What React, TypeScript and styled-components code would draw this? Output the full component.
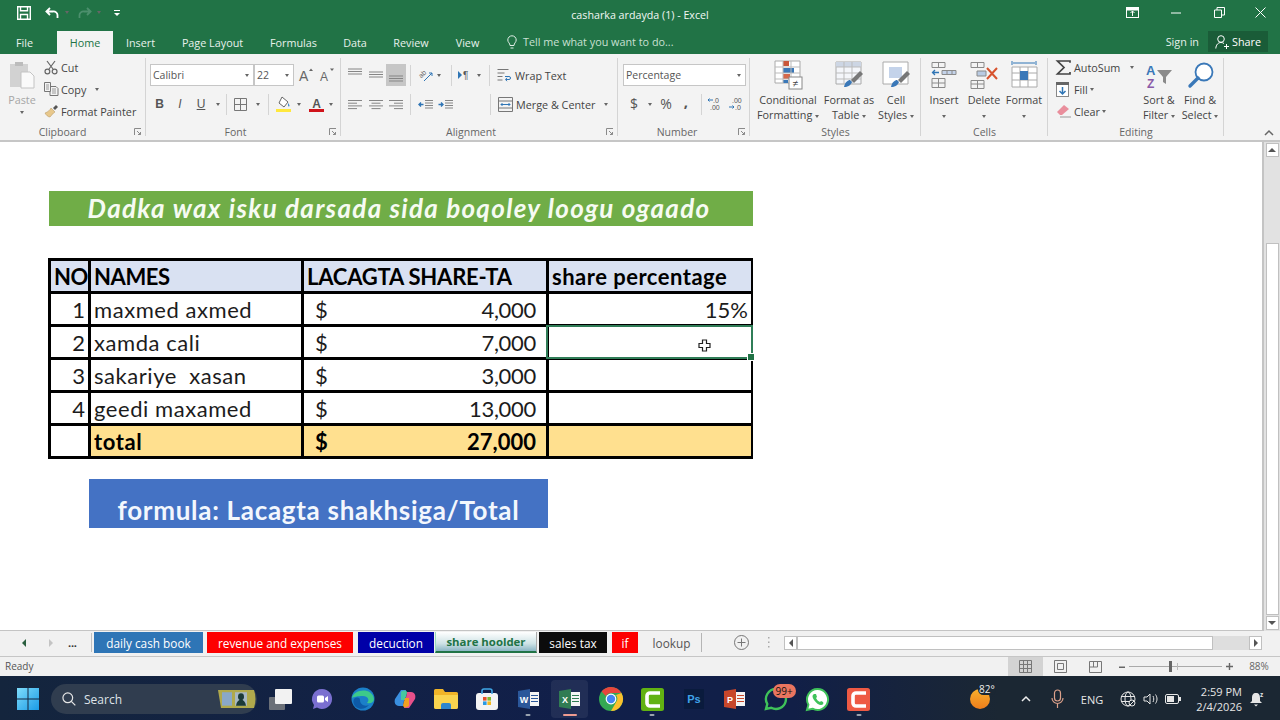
import React from "react";
import styled, { createGlobalStyle } from "styled-components";

const Global = createGlobalStyle`
  html, body { margin: 0; padding: 0; width: 1280px; height: 720px; overflow: hidden; background: #fff; }
  * { box-sizing: border-box; }
  svg { display: block; flex: none; overflow: visible; }
`;
const UI = `"Open Sans", "Noto Sans", sans-serif`;
const SHEET = `Lato, "Open Sans", sans-serif`;

const Page = styled.div`width:1280px;height:720px;display:flex;flex-direction:column;font-family:${UI};color:#444;font-size:10.8px;`;
const TitleBar = styled.div`height:30px;background:#217346;display:grid;grid-template-columns:1fr auto 1fr;align-items:center;color:#fff;`;
const Qat = styled.div`display:flex;align-items:center;padding:0 0 5px 17px;`;
const QatGap = styled.span<{ $w: number }>`width:${p => p.$w}px;flex:none;`;
const Title = styled.div`font-size:10.7px;color:#f2f7f4;padding-bottom:1px;`;
const WindowBtns = styled.div`display:flex;justify-content:flex-end;align-items:center;padding:0 14px 5px 0;gap:30px;`;
const TabBar = styled.div`height:24px;background:#217346;display:flex;align-items:stretch;color:#e8f1ec;`;
const RTab = styled.div<{ $w: number; $active?: boolean; $pr?: number }>`
  width:${p => p.$w}px;margin-top:1px;padding:0 ${p => p.$pr ?? 0}px 1px 0;display:flex;align-items:center;justify-content:center;
  background:${p => (p.$active ? "#f3f3f3" : "transparent")};color:${p => (p.$active ? "#217346" : "#e8f1ec")};
`;
const TellMe = styled.div`display:flex;align-items:center;gap:6px;padding:0 0 1px 14px;color:#c9e0d3;flex:1;`;
const SignIn = styled.div`display:flex;align-items:center;padding:0 9px 1px 0;`;
const ShareBtn = styled.div`width:60px;margin:1px 12px 2px 0;background:#1a5c38;display:flex;align-items:center;justify-content:center;gap:3px;color:#fff;`;

const Ribbon = styled.div`height:88px;background:#f3f3f3;border-bottom:2px solid #c6c6c6;display:flex;`;
const Group = styled.div<{ $w: number }>`width:${p => p.$w}px;position:relative;display:flex;flex-direction:column;
  &::after{content:"";position:absolute;right:0;top:4px;bottom:4px;width:1px;background:#d4d4d4;}`;
const GroupBody = styled.div<{ $px?: number }>`height:70px;padding:0 0 0 ${p => p.$px ?? 0}px;display:flex;`;
const GroupLabel = styled.div<{ $pr?: number }>`height:16px;margin-top:1px;display:flex;justify-content:center;align-items:center;padding-right:${p => p.$pr ?? 18}px;color:#666;font-size:10.5px;position:relative;`;
const Launcher = styled.span`position:absolute;right:4px;top:4px;`;
const Stack = styled.div`display:flex;flex-direction:column;padding-top:2px;`;
const Rows = styled.div`display:flex;flex-direction:column;gap:7px;padding-top:10px;`;
const Row = styled.div<{ $gap?: number }>`height:22px;display:flex;align-items:center;gap:${p => p.$gap ?? 0}px;`;
const ClipCol = styled.div`display:flex;flex-direction:column;padding-top:2px;`;
const ClipItem = styled.div`height:22px;display:flex;align-items:center;color:#444;`;
const PasteBtn = styled.div`width:44px;display:flex;flex-direction:column;align-items:center;color:#a6a6a6;padding-top:6px;line-height:14px;gap:4px;`;
const Combo = styled.div<{ $w: number }>`width:${p => p.$w}px;height:22px;background:#fff;border:1px solid #c6c6c6;display:flex;align-items:center;justify-content:space-between;padding:0 4px 0 2px;color:#555;font-size:10.5px;`;
const Caret = styled.span<{ $m?: number }>`display:inline-block;width:0;height:0;border-left:2.5px solid transparent;border-right:2.5px solid transparent;border-top:3px solid #666;margin-left:${p => p.$m ?? 0}px;flex:none;vertical-align:middle;`;
const Sep = styled.span<{ $l?: number; $r?: number }>`width:1px;height:21px;background:#d4d4d4;margin:0 ${p => p.$r ?? 6}px 0 ${p => p.$l ?? 6}px;flex:none;`;
const Hl = styled.div<{ $w: number; $on?: boolean; $ml?: number }>`width:${p => p.$w}px;height:22px;margin-left:${p => p.$ml ?? 0}px;display:flex;align-items:center;justify-content:center;background:${p => (p.$on ? "#c6c6c6" : "transparent")};color:#555;flex:none;`;
const FmtLetter = styled.span<{ $b?: boolean; $i?: boolean; $u?: boolean }>`font-family:"Liberation Sans",sans-serif;font-size:12px;color:#555;font-weight:${p => (p.$b ? 700 : 400)};font-style:${p => (p.$i ? "italic" : "normal")};text-decoration:${p => (p.$u ? "underline" : "none")};`;
const RowLabel = styled.span<{ $ml?: number }>`margin-left:${p => p.$ml ?? 3}px;white-space:nowrap;`;
const Big = styled.div<{ $w: number }>`width:${p => p.$w}px;padding-top:4px;display:flex;flex-direction:column;align-items:center;text-align:center;line-height:15px;white-space:nowrap;`;
const BigIcon = styled.div`height:34px;display:flex;align-items:center;justify-content:center;`;
const Symbol = styled.span<{ $s?: number; $b?: boolean; $mb?: number }>`font-size:${p => p.$s ?? 14}px;color:#555;line-height:1;font-weight:${p => (p.$b ? 700 : 400)};margin-bottom:${p => p.$mb ?? 0}px;`;
const Collapse = styled.div`flex:1;display:flex;justify-content:flex-end;align-items:flex-end;padding:0 6px 4px 0;`;

const Main = styled.div`height:489px;display:flex;`;
const Sheet = styled.div`flex:1;background:#fff;padding:49px 0 0 49px;border-right:2px solid #c4c4c4;border-bottom:1px solid #c4c4c4;`;
const Banner = styled.div`width:704px;height:35px;background:#70ad47;color:#f6fbf2;font:italic 700 26px/34px ${SHEET};letter-spacing:1.3px;text-align:center;padding-right:4px;`;
const Table = styled.div`position:relative;margin:32px 0 0 -1px;width:705px;background:#000;padding:3px;display:grid;gap:3px;grid-template-columns:37px 210px 242px 202px;grid-auto-rows:30px;font:22px/30px ${SHEET};color:#1a1a1a;`;
const Cell = styled.div<{ $bg?: string; $right?: boolean; $bold?: boolean; $pl?: number; $pr?: number; $split?: boolean; $ls?: number }>`
  background:${p => p.$bg ?? "#fff"};font-weight:${p => (p.$bold ? 700 : 400)};color:${p => (p.$bold ? "#000" : "#1c1c1c")};letter-spacing:${p => p.$ls ?? 0}px;
  padding:2px ${p => p.$pr ?? 3}px 0 ${p => p.$pl ?? 3}px;white-space:pre;overflow:hidden;display:flex;align-items:center;
  justify-content:${p => (p.$split ? "space-between" : p.$right ? "flex-end" : "flex-start")};
`;
const Selection = styled.div`position:absolute;left:498px;top:67px;width:207px;height:34px;border:2px solid #2f7d57;pointer-events:none;
  &::after{content:"";position:absolute;right:-4px;bottom:-4px;width:6px;height:6px;background:#217346;border:1px solid #fff;}`;
const CursorMark = styled.span`position:absolute;left:150px;top:12px;`;
const Formula = styled.div`margin:20px 0 0 40px;width:459px;height:49px;background:#4472c4;color:#f3f7fd;font:700 26px/32px ${SHEET};letter-spacing:.7px;text-align:center;padding-top:15px;`;
const VScroll = styled.div`width:16px;background:#e2e2e2;display:flex;flex-direction:column;align-items:center;padding:1px 0;`;
const ScrollBtn = styled.div<{ $w?: number }>`width:${p => p.$w ?? 13}px;height:14px;background:#fff;border:1px solid #c0c0c0;display:flex;align-items:center;justify-content:center;flex:none;`;
const VThumb = styled.div`width:13px;flex:1;margin:86px 0 1px;background:#fff;border:1px solid #c0c0c0;`;

const SheetTabs = styled.div`height:26px;padding-top:1px;background:#f1f1f1;border-bottom:1px solid #c6c6c6;display:flex;align-items:flex-start;`;
const TabNav = styled.div`width:94px;height:21px;display:flex;align-items:center;padding-left:20px;color:#333;font-size:12px;position:relative;
  &::after{content:"";position:absolute;right:2px;top:1px;height:19px;width:1px;background:#c0c0c0;}`;
const Dots = styled.span`margin-left:13px;font-weight:700;font-size:11px;letter-spacing:-.2px;`;
const NavGap = styled.span`width:19px;`;
const STab = styled.div<{ $w: number; $mr: number; $bg?: string; $fg?: string; $active?: boolean; $line?: boolean }>`
  width:${p => p.$w}px;height:21px;margin-right:${p => p.$mr}px;display:flex;align-items:center;justify-content:center;font-size:${p => (p.$active ? 11.4 : 11.8)}px;flex:none;
  background:${p => (p.$active ? "linear-gradient(#fff,#cfe3e6 60%,#8ab5c4)" : p.$bg ?? "transparent")};color:${p => p.$fg ?? "#666"};font-weight:${p => (p.$active ? 700 : 400)};
  position:relative;
  ${p => p.$active ? "border-bottom:2px solid #217346;border-left:1px solid #9db;border-right:1px solid #aaa;" : ""}
  ${p => p.$line ? "&::after{content:'';position:absolute;right:0;top:1px;height:19px;width:1px;background:#b5b5b5;}" : ""}
`;
const TabTools = styled.div`display:flex;align-items:center;height:21px;`;
const ToolGap = styled.span<{ $w: number }>`width:${p => p.$w}px;flex:none;`;
const HScroll = styled.div`margin:4px 0 0 0;width:478px;height:14px;background:#dedede;display:flex;justify-content:space-between;`;
const HThumb = styled.div`width:416px;height:14px;background:#fff;border:1px solid #c0c0c0;`;
const HLeft = styled.div`display:flex;`;
const Status = styled.div`height:19px;background:#f1f1f1;display:flex;align-items:center;justify-content:space-between;padding:0 2px 0 5px;font-size:10px;color:#555;`;
const Ready = styled.span`padding-bottom:2px;`;
const StatusRight = styled.div`display:flex;align-items:center;height:19px;`;
const ViewBtn = styled.div<{ $on?: boolean }>`width:35px;height:19px;display:flex;align-items:center;justify-content:center;background:${p => (p.$on ? "#d3d3d3" : "transparent")};`;
const Zoom = styled.div`display:flex;align-items:center;margin-left:6px;width:121px;gap:4px;`;
const Slider = styled.div`width:93px;height:1px;background:#aaa;position:relative;
  &::after{content:"";position:absolute;left:48px;top:-3px;width:1px;height:7px;background:#bbb;}`;
const SliderThumb = styled.span`position:absolute;left:40px;top:-5px;width:3px;height:11px;background:#666;`;
const Pct = styled.span`width:38px;text-align:center;font-size:10px;color:#666;padding-bottom:1px;`;

const Taskbar = styled.div`flex:1;padding-top:2px;background:linear-gradient(90deg,#14253d,#111f4a 45%,#111f47 62%,#1b2733 78%);display:flex;align-items:center;color:#f0f0f0;`;
const Start = styled.div`width:51px;padding-left:4px;display:flex;justify-content:center;`;
const Search = styled.div`width:206px;height:30px;border-radius:15px;background:#303d4f;display:flex;align-items:center;padding-left:11px;gap:8px;color:#dfe3e8;font-size:12px;position:relative;`;
const SearchArt = styled.span`position:absolute;right:0;top:6px;`;
const Slots = styled.div`display:flex;margin-left:3px;`;
const Slot = styled.div`width:41.3px;height:40px;display:flex;align-items:center;justify-content:center;position:relative;`;
const SlotHl = styled.span`position:absolute;inset:1px 2px 1px;background:rgba(255,255,255,.07);border-radius:4px;`;
const Pip = styled.span<{ $on?: boolean }>`position:absolute;bottom:3px;left:50%;transform:translateX(-50%);width:${p => (p.$on ? 14 : 5)}px;height:2px;border-radius:1px;background:${p => (p.$on ? "#ef9c91" : "#9aa3af")};`;
const Badge = styled.span`position:absolute;top:5px;left:17px;padding:0 3px;height:14px;border-radius:7px;background:#e9755f;color:#111;font-size:10px;line-height:14px;`;
const Tray = styled.div`margin-left:auto;padding-right:8px;display:flex;align-items:center;height:40px;`;
const Weather = styled.div`position:relative;width:20px;margin-right:17px;`;
const Temp = styled.span`position:absolute;left:8px;top:-5px;padding:0 1px;border-radius:6px;background:#1b2733;font-size:10px;line-height:11px;color:#eee;`;
const TrayItem = styled.div<{ $w: number }>`width:${p => p.$w}px;display:flex;justify-content:center;align-items:center;font-size:11px;color:#e6e6e6;`;
const Clock = styled.div`width:57px;text-align:right;font-size:11px;line-height:15px;color:#e6e6e6;white-space:nowrap;`;

/* ---- ribbon icons ---- */
const Launch = () => <svg width="8" height="8" viewBox="0 0 8 8" fill="none" stroke="#8a8a8a"><path d="M.5 7V.5H7M3 3l3.5 3.5M6.5 4v2.5H4" /></svg>;
const Save = () => <svg width="14" height="14" viewBox="0 0 14 14" fill="none" stroke="#fff" strokeWidth="1.4"><path d="M.7.7h12.6v12.6H.7z" /><path d="M3.5.7v4h7v-4M3.5 13.3V8.5h7v4.8" /></svg>;
const Undo = ({ c = "#fff", flip }: { c?: string; flip?: boolean }) => <svg width="14" height="12" viewBox="0 0 14 12" fill="none" stroke={c} strokeWidth="1.8" style={flip ? { transform: "scaleX(-1)" } : undefined}><path d="M5 1 1.4 4.5 5 8M1.4 4.5H8a4 3.6 0 0 1 4.5 3.6V11" /></svg>;
const Customize = () => <svg width="6" height="6" viewBox="0 0 6 6"><path d="M0 0h6v1H0z" fill="#fff" /><path d="M0 3h6L3 6z" fill="#fff" /></svg>;
const Lines = ({ k, w = 14 }: { k: string; w?: number }) => {
  const map: Record<string, number[][]> = {
    left: [[0, 14], [0, 9], [0, 14], [0, 9]], center: [[0, 14], [2.5, 9], [0, 14], [2.5, 9]], right: [[0, 14], [5, 9], [0, 14], [5, 9]],
  };
  return <svg width={w} height="11" viewBox="0 0 14 11" stroke="#858585">{map[k].map((l, i) => <path key={i} d={`M${l[0]} ${1.5 + i * 2.7}h${l[1]}`} />)}</svg>;
};
const VAlign = ({ y }: { y: number }) => <svg width="14" height="14" viewBox="0 0 14 14" stroke="#858585"><path d={`M0 ${y}h14M0 ${y + 2.5}h14M0 ${y + 5}h14`} /></svg>;
const Indent = ({ rev }: { rev?: boolean }) => <svg width="15" height="11" viewBox="0 0 15 11" fill="none"><path stroke="#858585" d="M7 1.5h8M7 4h8M7 6.5h8M7 9h8" /><path stroke="#2f75b5" strokeWidth="1.4" d={rev ? "M5.5 5.5H1M3 3.5l-2 2 2 2" : "M.5 5.5H5M3 3.5l2 2-2 2"} /></svg>;
const Borders = () => <svg width="13" height="13" viewBox="0 0 13 13" fill="none" stroke="#777"><path d="M.5.5h12v12H.5zM6.5.5v12M.5 6.5h12" /></svg>;
const Fill = () => <svg width="15" height="16" viewBox="0 0 15 16"><path d="m6 1 6 5-4 5-5-4z" fill="#fff" stroke="#666" /><path d="M12 7c1.5 2 2 3 1 3.5S12 9 12 7z" fill="#3a87c8" /><rect y="13" width="15" height="3" fill="#ffe83d" /></svg>;
const FontColor = () => <svg width="15" height="16" viewBox="0 0 15 16"><text x="7.5" y="12" textAnchor="middle" fontSize="12" fontWeight="700" fill="#555" fontFamily="Liberation Sans">A</text><rect y="13" width="15" height="3" fill="#d0131a" /></svg>;
const GrowA = ({ up, s }: { up: boolean; s: number }) => <svg width="15" height="15" viewBox="0 0 15 15"><text x="0" y="13" fontSize={s} fill="#666" fontFamily="Liberation Sans">A</text><path d={up ? "m10 3 2-2.5L14 3z" : "m10 .5 2 2.5 2-2.5z"} fill="#666" /></svg>;
const Scissors = () => <svg width="14" height="15" viewBox="0 0 14 15" fill="none" stroke="#666" strokeWidth="1.2"><path d="M3 1l6 8M11 1 5 9" /><circle cx="3.4" cy="11.5" r="2.4" /><circle cx="10.6" cy="11.5" r="2.4" /></svg>;
const CopyIc = () => <svg width="15" height="14" viewBox="0 0 15 14" fill="none" stroke="#777"><path d="M.5.5h6v9h-6zM7 4.5h5l2 2v7H6v-4" /><path stroke="#999" d="M2 3h3M2 5h3M2 7h3M8 7h4M8 9h4M8 11h4" /></svg>;
const Painter = () => <svg width="16" height="14" viewBox="0 0 16 14"><path d="M1 9c3-1 5-3 6-5l4 4c-2 1-3 3-5 5-2 0-4-2-5-4z" fill="#e8c88c" stroke="#b0905a" strokeWidth=".5" /><path d="m9 4 3-3 2 2-3 3z" fill="#555" /></svg>;
const PasteIc = () => <svg width="27" height="29" viewBox="0 0 27 29"><path d="M1 4h18v23H1z" fill="#d2d2d2" /><path d="M6 2h8v4H6z" fill="#bcbcbc" /><path d="M12 12h9l4 4v12H12z" fill="#fafafa" stroke="#c4c4c4" /></svg>;
const Orient = () => <svg width="15" height="14" viewBox="0 0 15 14" fill="none" stroke="#777"><text x="1" y="9" fontSize="7" fill="#666" stroke="none" transform="rotate(-45 4 7)" fontFamily="Liberation Sans">ab</text><path stroke="#2f75b5" d="M6 13 14 5M14 5v3M14 5h-3" /></svg>;
const Para = () => <svg width="14" height="10" viewBox="0 0 14 10"><path d="m0 1 4 4-4 4z" fill="#2f75b5" /><text x="5" y="9" fontSize="10" fill="#555" fontFamily="Liberation Sans">¶</text></svg>;
const Wrap = () => <svg width="15" height="15" viewBox="0 0 15 15" fill="none" stroke="#777"><path d="M.5 1.5h11M.5 5h7M.5 8.5h5M.5 12h5" /><path stroke="#2f75b5" d="M8 8.5h4a1.5 1.5 0 0 1 0 3H9M10 9.8l-1.5 1.7 1.5 1.7" /></svg>;
const Merge = () => <svg width="15" height="15" viewBox="0 0 15 15" fill="none" stroke="#777"><path d="M.5.5h14v14H.5zM.5 4h14M.5 11h14" /><path stroke="#2f75b5" d="M3 7.5h9M4.5 6 3 7.5 4.5 9M10.5 6 12 7.5 10.5 9" /></svg>;
const DecCh = ({ inc }: { inc: boolean }) => <svg width="15" height="14" viewBox="0 0 15 14"><text x={inc ? 6 : 3} y="6" fontSize="7" fill="#555" fontFamily="Liberation Sans">{inc ? ".0" : ".00"}</text><text x={inc ? 3 : 6} y="13" fontSize="7" fill="#555" fontFamily="Liberation Sans">{inc ? ".00" : ".0"}</text><path stroke="#2f75b5" fill="none" d={inc ? "M6 3H1M2.5 1.5 1 3l1.5 1.5" : "M0 10h5M3.5 8.5 5 10l-1.5 1.5"} /></svg>;
const CondFmt = () => <svg width="28" height="30" viewBox="0 0 28 30"><path d="M1 1h25v22H1z" fill="#fff" stroke="#aaa" /><rect x="9" y="1" width="6" height="5" fill="#c8573a" /><rect x="9" y="8" width="11" height="5" fill="#3a78b8" /><rect x="9" y="14" width="7" height="5" fill="#d5694a" /><rect x="9" y="20" width="5" height="3" fill="#3a78b8" /><path stroke="#bbb" d="M9 1v22M17 1v22M1 7h25M1 13h25M1 19h25" fill="none" /><rect x="15" y="17" width="13" height="12" fill="#fff" stroke="#888" /><text x="21.5" y="27" fontSize="10" textAnchor="middle" fill="#444" fontFamily="Liberation Sans">≠</text></svg>;
const FmtTable = () => <svg width="28" height="30" viewBox="0 0 28 30"><path d="M1 2h25v22H1z" fill="#f4f6fa" stroke="#aaa" /><path d="M1 2h25v5H1z" fill="#cdd6e4" /><path stroke="#bbb" d="M9 2v22M17 2v22M1 7h25M1 13h25M1 19h25" fill="none" /><path d="M9 27c1-5 4-7 6-7l2 2c-1 3-4 5-8 5z" fill="#3a78b8" /><path d="m16 20 9-9 3 3-9 9z" fill="#777" /></svg>;
const CellSt = () => <svg width="28" height="30" viewBox="0 0 28 30"><path d="M1 2h25v22H1z" fill="#fff" stroke="#aaa" /><path d="M7 7h13v11H7z" fill="#c4d3ea" /><path d="M9 27c1-5 4-7 6-7l2 2c-1 3-4 5-8 5z" fill="#3a78b8" /><path d="m16 20 9-9 3 3-9 9z" fill="#777" /></svg>;
const InsertIc = () => <svg width="26" height="27" viewBox="0 0 26 27" fill="none" stroke="#8a8a8a"><path d="M1 .5h13v5H1zM7.5.5v5M1 16.5h13v9H1zM7.5 16.5v9M1 21h13" /><path stroke="#2f75b5" strokeWidth="1.3" d="M8 10.5H1.5M4 8 1.5 10.5 4 13" /><path d="M11 8.500h14v4H11zM16 8.500v4M21 8.500v4" fill="#c4d3ea" /></svg>;
const DeleteIc = () => <svg width="29" height="27" viewBox="0 0 29 27" fill="none" stroke="#8a8a8a"><path d="M1 .5h13v5H1zM7.5.5v5M1 18.500h13v8H1zM7.5 18.500v8M1 22h13" /><path d="M7 9h9v5H7z" fill="#b9cbe3" /><path stroke="#d7532e" strokeWidth="2" d="m17 6 10 11M27 6 17 17" /></svg>;
const FormatIc = () => <svg width="26" height="30" viewBox="0 0 26 30" fill="none" stroke="#aaa"><path stroke="#2f75b5" d="M1 1v4M25 1v4M2 3h22" /><path d="M1 7h25v20H1zM9 7v20M17 7v20M1 13h25M1 20h25" fill="#fff" /><rect x="9" y="11" width="8" height="9" fill="#3a78b8" stroke="none" /></svg>;
const Sigma = () => <svg width="15" height="15" viewBox="0 0 15 15" fill="none" stroke="#444" strokeWidth="1.7"><path d="M14 2.800V1H1.500L8 7.500 1.500 14H14v-2" /></svg>;
const FillIc = () => <svg width="13" height="15" viewBox="0 0 13 15"><rect x=".5" y=".5" width="12" height="14" fill="#fff" stroke="#888" /><rect y="0" width="13" height="3" fill="#666" /><path d="M6.500 5v7M3.500 9l3 3 3-3" stroke="#2f75b5" strokeWidth="1.500" fill="none" /></svg>;
const Eraser = () => <svg width="15" height="14" viewBox="0 0 15 14"><path d="m1 8 7-7 5 4-7 6H4z" fill="#e98e9c" /><path d="M4 13h11" stroke="#999" /></svg>;
const SortIc = () => <svg width="27" height="27" viewBox="0 0 27 27"><text x="0" y="13" fontSize="13" fontWeight="700" fill="#3a78b8" fontFamily="Liberation Sans">A</text><text x="1" y="26" fontSize="12" fontWeight="700" fill="#8a5aa8" fontFamily="Liberation Sans">Z</text><path d="M11 8h15l-6 7v7l-3-2v-5z" fill="#8a8a8a" /></svg>;
const FindIc = () => <svg width="27" height="28" viewBox="0 0 27 28" fill="none"><circle cx="17" cy="11" r="8.500" stroke="#3a78b8" strokeWidth="1.800" fill="#fff" /><path d="M11 17 3 25" stroke="#3a78b8" strokeWidth="3.400" strokeLinecap="round" /></svg>;
const Chevron = ({ c = "#666" }: { c?: string }) => <svg width="10" height="6" viewBox="0 0 10 6" fill="none" stroke={c} strokeWidth="1.500"><path d="m1 5 4-4 4 4" /></svg>;
const Tri = ({ d, c = "#555" }: { d: "u" | "d" | "l" | "r"; c?: string }) => { const m = { u: "M0 6 4 2l4 4z", d: "M0 2l4 4 4-4z", l: "M6 0 2 4l4 4z", r: "M2 0l4 4-4 4z" }; return <svg width="8" height="8" viewBox="0 0 8 8"><path d={m[d]} fill={c} /></svg>; };

/* ---- taskbar icons ---- */
const WinLogo = () => <svg width="22" height="22" viewBox="0 0 22 22"><defs><linearGradient id="w" x1="0" y1="0" x2="1" y2="1"><stop offset="0" stopColor="#7fdcfb" /><stop offset="1" stopColor="#1a9be6" /></linearGradient></defs><path fill="url(#w)" d="M0 0h10.500v10.500H0zM11.500 0H22v10.500H11.500zM0 11.500h10.500V22H0zM11.500 11.500H22V22H11.500z" /></svg>;
const SearchIc = () => <svg width="14" height="14" viewBox="0 0 15 15" fill="none" stroke="#e6e6e6" strokeWidth="1.300"><circle cx="6.200" cy="6.200" r="5.200" /><path d="m10 10 4.300 4.300" /></svg>;
const Art = () => <svg width="40" height="19" viewBox="0 0 40 17" preserveAspectRatio="none"><path d="M1 0h36q3 8 0 16H4z" fill="#b0a94c" /><rect x="5" y="2" width="10" height="12" fill="#8aa8c8" /><rect x="18" y="2" width="12" height="12" fill="#a8b8c4" /><path d="M19 14c1-7 9-7 10 0z" fill="#1c3a38" /><circle cx="24" cy="6" r="3" fill="#1c3a38" /></svg>;
const TaskView = () => <svg width="23" height="21" viewBox="0 0 23 21"><rect x="0" y="8" width="16" height="13" rx="1" fill="#6b7078" /><rect x="6" y="0" width="17" height="15" rx="1" fill="#f2f2f2" /></svg>;
const Meet = () => <svg width="22" height="22" viewBox="0 0 22 22"><path d="M11 1a10 10 0 1 1-5 18.600L2 21l1-4A10 10 0 0 1 11 1z" fill="#7a6fd0" /><rect x="6" y="7.500" width="7" height="7" rx="1.500" fill="#fff" /><path d="m14 10 3-2v6l-3-2z" fill="#fff" /></svg>;
const Edge = () => <svg width="24" height="24" viewBox="0 0 24 24"><circle cx="12" cy="12" r="11.500" fill="#1b7fc9" /><path d="M1 11C3 2 21 0 23 12c0 3-3 5-7 4 3-3 1-7-4-7-5 0-10 1-11 2z" fill="#3dc98a" /><path d="M9 13c0 4 4 7 9 5-3 4-9 5-13 2-3-3-3-6-2-8 2-2 6-2 6 1z" fill="#0d5aa8" /></svg>;
const Copilot = () => <svg width="22" height="22" viewBox="0 0 22 22"><path d="M7 2h5l-3 16H5C1 18 0 14 1 11z" fill="#3a8fe0" /><path d="M15 20h-5l3-16h4c4 0 5 4 4 7z" fill="#e8508a" /><path d="M7 4c3-2 6-2 6 1l-2 7H7z" fill="#48c8a0" /><path d="M15 18c-3 2-6 2-6-1l2-7h4z" fill="#f0a020" /></svg>;
const Folder = () => <svg width="24" height="20" viewBox="0 0 24 20"><path d="M0 1.500A1.500 1.500 0 0 1 1.500 0H9l2 3h11.500A1.500 1.500 0 0 1 24 4.500V18a2 2 0 0 1-2 2H2a2 2 0 0 1-2-2z" fill="#f0b428" /><path d="M0 6h24v12a2 2 0 0 1-2 2H2a2 2 0 0 1-2-2z" fill="#f9d44f" /><path d="M7 20v-4a2 2 0 0 1 2-2h6a2 2 0 0 1 2 2v4z" fill="#2d86cf" /></svg>;
const Store = () => <svg width="22" height="22" viewBox="0 0 22 22"><rect y="5" width="22" height="17" rx="3" fill="#f4f4f4" /><path d="M6 6V3a2 2 0 0 1 2-2h6a2 2 0 0 1 2 2v3" fill="none" stroke="#3fa8e8" strokeWidth="1.600" /><rect x="7" y="9" width="3.600" height="3.600" fill="#e5512a" /><rect x="11.400" y="9" width="3.600" height="3.600" fill="#7fba2a" /><rect x="7" y="13.400" width="3.600" height="3.600" fill="#2a9be5" /><rect x="11.400" y="13.400" width="3.600" height="3.600" fill="#f4b81f" /></svg>;
const Office = ({ bg, l, x = 10 }: { bg: string; l: string; x?: number }) => <svg width="21" height="20" viewBox="0 0 21 20"><rect x="10" y="3" width="11" height="14" fill="#f4f4f4" /><path stroke={bg} strokeWidth="1" d="M13 6.500h7M13 9.500h7M13 12.500h7" fill="none" /><path d="M0 2 12 0v20L0 18z" fill={bg} /><text x={x - 4} y="13.500" textAnchor="middle" fontSize="9" fontWeight="700" fill="#fff" fontFamily="Liberation Sans">{l}</text></svg>;
const Chrome = () => <svg width="24" height="24" viewBox="0 0 24 24"><circle cx="12" cy="12" r="12" fill="#34a853" /><path d="M12 0a12 12 0 0 1 10.400 6H12a6 6 0 0 0-5.200 3L2.600 4.500A12 12 0 0 1 12 0z" fill="#e8453c" /><path d="M22.400 6A12 12 0 0 1 12 24l5.200-9A6 6 0 0 0 17 8z" fill="#fbc02d" /><circle cx="12" cy="12" r="5.400" fill="#fff" /><circle cx="12" cy="12" r="4.200" fill="#4285f4" /></svg>;
const Cam = ({ bg }: { bg: string }) => <svg width="23" height="23" viewBox="0 0 23 23"><rect width="23" height="23" rx="2.500" fill={bg} /><path d="M19 5H9a3 3 0 0 0-3 3v7a3 3 0 0 0 3 3h10" fill="none" stroke="#fff" strokeWidth="3.600" /></svg>;
const Ps = () => <svg width="20" height="20" viewBox="0 0 20 20"><rect width="20" height="20" fill="#0a1b3d" /><text x="10" y="14" textAnchor="middle" fontSize="11" fontWeight="700" fill="#3fa2e8" fontFamily="Liberation Sans">Ps</text></svg>;
const Wa = () => <svg width="23" height="23" viewBox="0 0 23 23"><path d="M11.500 1a10.500 10.500 0 1 1-5 19.700L1 22l1.400-5.300A10.500 10.500 0 0 1 11.500 1z" fill="#fff" stroke="#3fc25a" strokeWidth="2" /><path d="M8 6c-2 1-2 3 0 6s5 5 7 5 3-2 2-3l-2-1-1 1c-2-1-3-2-4-4l1-1-1-3z" fill="#3fc25a" /></svg>;
const WaSolid = () => <svg width="22" height="23" viewBox="0 0 22 23"><path d="M11 1a10 10 0 1 1-4.800 18.800L1 21l1.300-5A10 10 0 0 1 11 1z" fill="none" stroke="#3fc25a" strokeWidth="2.400" /></svg>;
const Sun = () => <svg width="20" height="20" viewBox="0 0 20 20"><defs><linearGradient id="s" x1="0" y1="0" x2="0" y2="1"><stop offset="0" stopColor="#f9b02c" /><stop offset="1" stopColor="#ee7d1c" /></linearGradient></defs><circle cx="10" cy="10" r="10" fill="url(#s)" /></svg>;
const Mic = () => <svg width="13" height="20" viewBox="0 0 13 20" fill="none" stroke="#dba08a" strokeWidth="1.200"><rect x="3.500" y="1" width="6" height="11" rx="3" /><path d="M1 9a5.500 5.500 0 0 0 11 0M6.500 15v4" /></svg>;
const Globe = () => <svg width="16" height="16" viewBox="0 0 16 16" fill="none" stroke="#e6e6e6"><circle cx="8" cy="8" r="7" /><ellipse cx="8" cy="8" rx="3" ry="7" /><path d="M1 5.500h14M1 10.500h14" /><circle cx="12" cy="12" r="3" fill="#1b2733" /><path d="m10 14 4-4" /></svg>;
const Vol = () => <svg width="16" height="14" viewBox="0 0 16 14" fill="none" stroke="#e6e6e6"><path d="M1 5v4h3l3 3V2L4 5zM10 4c1 2 1 4 0 6M12.500 2.500c2 3 2 6 0 9" /></svg>;
const Batt = () => <svg width="16" height="10" viewBox="0 0 16 10"><rect x=".5" y=".5" width="13" height="9" rx="1.500" fill="none" stroke="#e6e6e6" /><rect x="2" y="2" width="7" height="6" fill="#e6e6e6" /><rect x="14" y="3" width="2" height="4" fill="#e6e6e6" /></svg>;
const Bell = () => <svg width="15" height="16" viewBox="0 0 15 16"><path d="M6 2c3 0 4 2 4 5v3l2 2H0l2-2V7c0-3 1-5 4-5z" fill="#e6e6e6" /><path d="M4 13.500h4l-2 2z" fill="#e6e6e6" /><text x="10" y="6" fontSize="6.500" fontWeight="700" fill="#e6e6e6" fontFamily="Liberation Sans">z</text></svg>;
const Minus = () => <svg width="6" height="6" viewBox="0 0 6 6"><path d="M0 2.500h6v1.500H0z" fill="#666" /></svg>;
const Plus = () => <svg width="7" height="7" viewBox="0 0 7 7"><path d="M0 2.800h7v1.400H0zM2.800 0h1.400v7H2.800z" fill="#666" /></svg>;

const rows = [
  ["1", "maxmed axmed", "4,000", "15%"],
  ["2", "xamda cali", "7,000", ""],
  ["3", "sakariye  xasan", "3,000", ""],
  ["4", "geedi maxamed", "13,000", ""],
];

export default function App() {
  return (
    <Page>
      <Global />
      <TitleBar>
        <Qat>
          <Save />
          <QatGap $w={14} />
          <Undo />
          <Caret $m={6} />
          <QatGap $w={9} />
          <Undo c="#4c8f6d" flip />
          <Caret $m={5} />
          <QatGap $w={13} />
          <Customize />
        </Qat>
        <Title>casharka ardayda (1) - Excel</Title>
        <WindowBtns>
          <svg width="13" height="11" viewBox="0 0 13 11" fill="none" stroke="#fff"><rect x=".5" y=".5" width="12" height="10" /><rect x=".5" y=".5" width="12" height="2.500" fill="#fff" /><path d="M6.500 9V4M4.500 6l2-2 2 2" /></svg>
          <svg width="15" height="11" viewBox="0 0 15 11" stroke="#fff"><path d="M2 6h10" /></svg>
          <svg width="11" height="11" viewBox="0 0 11 11" fill="none" stroke="#fff"><path d="M.5 3h7v7.500h-7zM3 3V.5h7.500V8H8" /></svg>
          <svg width="11" height="11" viewBox="0 0 11 11" stroke="#fff"><path d="m.5.5 10 10M10.500.5l-10 10" /></svg>
        </WindowBtns>
      </TitleBar>
      <TabBar>
        <RTab $w={57} $pr={8}>File</RTab>
        <RTab $w={56} $active>Home</RTab>
        <RTab $w={55}>Insert</RTab>
        <RTab $w={89}>Page Layout</RTab>
        <RTab $w={73}>Formulas</RTab>
        <RTab $w={50}>Data</RTab>
        <RTab $w={62}>Review</RTab>
        <RTab $w={51}>View</RTab>
        <TellMe>
          <svg width="10" height="14" viewBox="0 0 10 14" fill="none" stroke="#e2efe8"><path d="M3 10.500C3 8 .8 7.500.8 5a4.200 4.200 0 0 1 8.400 0C9.200 7.500 7 8 7 10.500zM3.500 13h3" /></svg>
          Tell me what you want to do...
        </TellMe>
        <SignIn>Sign in</SignIn>
        <ShareBtn>
          <svg width="14" height="14" viewBox="0 0 14 14" fill="none" stroke="#fff"><circle cx="6" cy="4" r="3.300" /><path d="M.8 13.500c.3-4 2.500-6 5.200-6 1.200 0 2 .3 3 1M9 11.500h5M11.500 9v5" /></svg>
          Share
        </ShareBtn>
      </TabBar>

      <Ribbon>
        <Group $w={146}>
          <GroupBody>
            <PasteBtn>
              <PasteIc />
              <span>Paste</span>
              <Caret />
            </PasteBtn>
            <ClipCol>
              <ClipItem><Scissors /><RowLabel $ml={3}>Cut</RowLabel></ClipItem>
              <ClipItem><CopyIc /><RowLabel $ml={2}>Copy</RowLabel><Caret $m={9} /></ClipItem>
              <ClipItem><Painter /><RowLabel $ml={1}>Format Painter</RowLabel></ClipItem>
            </ClipCol>
          </GroupBody>
          <GroupLabel $pr={21}>Clipboard<Launcher><Launch /></Launcher></GroupLabel>
        </Group>

        <Group $w={195}>
          <GroupBody $px={4}>
            <Rows>
              <Row>
                <Combo $w={104}>Calibri<Caret /></Combo>
                <Combo $w={40}>22<Caret /></Combo>
                <Hl $w={21} $ml={2}><GrowA up s={14} /></Hl>
                <Hl $w={20}><GrowA up={false} s={12} /></Hl>
              </Row>
              <Row>
                <Hl $w={19}><FmtLetter $b>B</FmtLetter></Hl>
                <Hl $w={22}><FmtLetter $i>I</FmtLetter></Hl>
                <Hl $w={20}><FmtLetter $u>U</FmtLetter></Hl>
                <Caret $m={5} />
                <Sep $l={6} $r={7} />
                <Borders />
                <Caret $m={9} />
                <Sep $l={8} $r={7} />
                <Fill />
                <Caret $m={6} />
                <QatGap $w={8} />
                <FontColor />
                <Caret $m={5} />
              </Row>
            </Rows>
          </GroupBody>
          <GroupLabel $pr={16}>Font<Launcher><Launch /></Launcher></GroupLabel>
        </Group>

        <Group $w={277}>
          <GroupBody $px={4}>
            <Rows>
              <Row>
                <Hl $w={20}><VAlign y={1} /></Hl>
                <Hl $w={21}><VAlign y={4} /></Hl>
                <Hl $w={20} $on><VAlign y={8} /></Hl>
                <Sep $l={4} $r={4} />
                <Hl $w={20}><Orient /></Hl>
                <Caret $m={2} />
                <Sep $l={10} $r={3} />
                <Hl $w={20}><Para /></Hl>
                <Caret $m={2} />
                <Sep $l={8} $r={7} />
                <Wrap /><RowLabel>Wrap Text</RowLabel>
              </Row>
              <Row>
                <Hl $w={20}><Lines k="left" /></Hl>
                <Hl $w={21}><Lines k="center" /></Hl>
                <Hl $w={20}><Lines k="right" /></Hl>
                <Sep $l={4} $r={4} />
                <Hl $w={20}><Indent rev /></Hl>
                <Hl $w={20}><Indent /></Hl>
                <Sep $l={35} $r={7} />
                <Merge /><RowLabel>Merge &amp; Center</RowLabel><Caret $m={9} />
              </Row>
            </Rows>
          </GroupBody>
          <GroupLabel $pr={17}>Alignment<Launcher><Launch /></Launcher></GroupLabel>
        </Group>

        <Group $w={132}>
          <GroupBody $px={5}>
            <Rows>
              <Row><Combo $w={123}>Percentage<Caret /></Combo></Row>
              <Row>
                <Hl $w={22}><Symbol $s={14}>$</Symbol></Hl>
                <Caret $m={3} />
                <Hl $w={26} $ml={1}><Symbol $s={14}>%</Symbol></Hl>
                <Hl $w={14}><Symbol $s={15} $b $mb={5}>,</Symbol></Hl>
                <Sep $l={8} $r={4} />
                <Hl $w={16}><DecCh inc /></Hl>
                <Hl $w={28}><DecCh inc={false} /></Hl>
              </Row>
            </Rows>
          </GroupBody>
          <GroupLabel $pr={14}>Number<Launcher><Launch /></Launcher></GroupLabel>
        </Group>

        <Group $w={171}>
          <GroupBody $px={5}>
            <Big $w={66}><BigIcon><CondFmt /></BigIcon><span>Conditional</span><span>Formatting <Caret /></span></Big>
            <Big $w={56}><BigIcon><FmtTable /></BigIcon><span>Format as</span><span>Table <Caret /></span></Big>
            <Big $w={38}><BigIcon><CellSt /></BigIcon><span>Cell</span><span>Styles <Caret /></span></Big>
          </GroupBody>
          <GroupLabel $pr={0}>Styles</GroupLabel>
        </Group>

        <Group $w={127}>
          <GroupBody $px={3}>
            <Big $w={40}><BigIcon><InsertIc /></BigIcon><span>Insert</span><span><Caret /></span></Big>
            <Big $w={40}><BigIcon><DeleteIc /></BigIcon><span>Delete</span><span><Caret /></span></Big>
            <Big $w={40}><BigIcon><FormatIc /></BigIcon><span>Format</span><span><Caret /></span></Big>
          </GroupBody>
          <GroupLabel $pr={0}>Cells</GroupLabel>
        </Group>

        <Group $w={176}>
          <GroupBody $px={8}>
            <Stack style={{ width: 83 }}>
              <ClipItem><Sigma /><RowLabel $ml={3}>AutoSum</RowLabel><Caret $m={10} /></ClipItem>
              <ClipItem><FillIc /><RowLabel $ml={5}>Fill</RowLabel><Caret $m={2} /></ClipItem>
              <ClipItem><Eraser /><RowLabel $ml={3}>Clear</RowLabel><Caret $m={2} /></ClipItem>
            </Stack>
            <Big $w={40}><BigIcon><SortIc /></BigIcon><span>Sort &amp;</span><span>Filter <Caret /></span></Big>
            <Big $w={42}><BigIcon><FindIc /></BigIcon><span>Find &amp;</span><span>Select <Caret /></span></Big>
          </GroupBody>
          <GroupLabel $pr={0}>Editing</GroupLabel>
        </Group>
        <Collapse><Chevron /></Collapse>
      </Ribbon>

      <Main>
        <Sheet>
          <Banner>Dadka wax isku darsada sida boqoley loogu ogaado</Banner>
          <Table>
            <Cell $bg="#d9e1f2" $bold $ls={-0.4}>NO</Cell>
            <Cell $bg="#d9e1f2" $bold $ls={-0.4}>NAMES</Cell>
            <Cell $bg="#d9e1f2" $bold $ls={-0.2}>LACAGTA SHARE-TA</Cell>
            <Cell $bg="#d9e1f2" $bold $ls={0.5}>share percentage</Cell>
            {rows.map(r => (
              <React.Fragment key={r[0]}>
                <Cell $right>{r[0]}</Cell>
                <Cell $ls={0.55}>{r[1]}</Cell>
                <Cell $split $pl={11} $pr={10} $ls={-0.3}><span>$</span><span>{r[2]}</span></Cell>
                <Cell $right>{r[3]}</Cell>
              </React.Fragment>
            ))}
            <Cell />
            <Cell $bg="#ffe08f" $bold $ls={0.6}>total</Cell>
            <Cell $bg="#ffe08f" $bold $split $pl={11} $pr={10}><span>$</span><span>27,000</span></Cell>
            <Cell $bg="#ffe08f" />
            <Selection>
              <CursorMark>
                <svg width="13" height="13" viewBox="0 0 13 13"><path d="M4.500 1h4v3.500H12v4H8.500V12h-4V8.500H1v-4h3.500z" fill="#fff" stroke="#222" strokeWidth="1.200" /></svg>
              </CursorMark>
            </Selection>
          </Table>
          <Formula>formula: Lacagta shakhsiga/Total</Formula>
        </Sheet>
        <VScroll>
          <ScrollBtn><Tri d="u" /></ScrollBtn>
          <VThumb />
          <ScrollBtn><Tri d="d" /></ScrollBtn>
        </VScroll>
      </Main>

      <SheetTabs>
        <TabNav><Tri d="l" c="#2a5f3f" /><NavGap /><Tri d="r" c="#c4c4c4" /><Dots>...</Dots></TabNav>
        <STab $w={109} $mr={4} $bg="#2e75b6" $fg="#fff">daily cash book</STab>
        <STab $w={146} $mr={5} $bg="#fd0000" $fg="#fff">revenue and expenses</STab>
        <STab $w={76} $mr={1} $bg="#0000a8" $fg="#fff">decuction</STab>
        <STab $w={102} $mr={2} $active $fg="#217346">share hoolder</STab>
        <STab $w={68} $mr={5} $bg="#0c0c0c" $fg="#fff">sales tax</STab>
        <STab $w={26} $mr={3} $bg="#fd0000" $fg="#fff">if</STab>
        <STab $w={61} $mr={0} $fg="#555" $line>lookup</STab>
        <TabTools>
          <ToolGap $w={32} />
          <svg width="15" height="15" viewBox="0 0 15 15" fill="none" stroke="#777"><circle cx="7.500" cy="7.500" r="7" /><path d="M7.500 3.500v8M3.500 7.500h8" /></svg>
          <ToolGap $w={18} />
          <svg width="3" height="11" viewBox="0 0 3 11" fill="#aaa"><rect x="1" y="0" width="1.500" height="1.500" /><rect x="1" y="4.500" width="1.500" height="1.500" /><rect x="1" y="9" width="1.500" height="1.500" /></svg>
          <ToolGap $w={14} />
        </TabTools>
        <HScroll>
          <HLeft>
            <ScrollBtn><Tri d="l" /></ScrollBtn>
            <HThumb />
          </HLeft>
          <ScrollBtn><Tri d="r" /></ScrollBtn>
        </HScroll>
      </SheetTabs>

      <Status>
        <Ready>Ready</Ready>
        <StatusRight>
          <ViewBtn $on><svg width="13" height="13" viewBox="0 0 13 13" fill="none" stroke="#777"><path d="M.5.5h12v12H.5zM4.500.5v12M8.500.5v12M.5 4.500h12M.5 8.500h12" /></svg></ViewBtn>
          <ViewBtn><svg width="13" height="13" viewBox="0 0 13 13" fill="none" stroke="#777"><path d="M.5.5h12v12H.5zM3.500 3.500h6v6h-6z" /></svg></ViewBtn>
          <ViewBtn><svg width="13" height="12" viewBox="0 0 13 12" fill="none" stroke="#777"><path d="M.5.500h12v11H.5zM.5 6h8V.5M4.500.5V6" /></svg></ViewBtn>
          <Zoom>
            <Minus />
            <Slider><SliderThumb /></Slider>
            <Plus />
          </Zoom>
          <Pct>88%</Pct>
        </StatusRight>
      </Status>

      <Taskbar>
        <Start><WinLogo /></Start>
        <Search><SearchIc />Search<SearchArt><Art /></SearchArt></Search>
        <Slots>
          <Slot><TaskView /></Slot>
          <Slot><Meet /></Slot>
          <Slot><Edge /></Slot>
          <Slot><Copilot /></Slot>
          <Slot><Folder /></Slot>
          <Slot><Store /></Slot>
          <Slot><Office bg="#2b579a" l="W" /><Pip /></Slot>
          <Slot><SlotHl /><Office bg="#217346" l="X" /><Pip $on /></Slot>
          <Slot><Chrome /></Slot>
          <Slot><Cam bg="#62b212" /><Pip /></Slot>
          <Slot><Ps /></Slot>
          <Slot><Office bg="#c8472b" l="P" /></Slot>
          <Slot><WaSolid /><Badge>99+</Badge></Slot>
          <Slot><Wa /></Slot>
          <Slot><Cam bg="#ee5a44" /><Pip /></Slot>
        </Slots>
        <Tray>
          <Weather><Sun /><Temp>82°</Temp></Weather>
          <TrayItem $w={38}><Chevron c="#eee" /></TrayItem>
          <TrayItem $w={24}><Mic /></TrayItem>
          <TrayItem $w={46}>ENG</TrayItem>
          <TrayItem $w={26}><Globe /></TrayItem>
          <TrayItem $w={20}><Vol /></TrayItem>
          <TrayItem $w={24}><Batt /></TrayItem>
          <Clock>2:59 PM<br />2/4/2026</Clock>
          <TrayItem $w={30}><Bell /></TrayItem>
        </Tray>
      </Taskbar>
    </Page>
  );
}
